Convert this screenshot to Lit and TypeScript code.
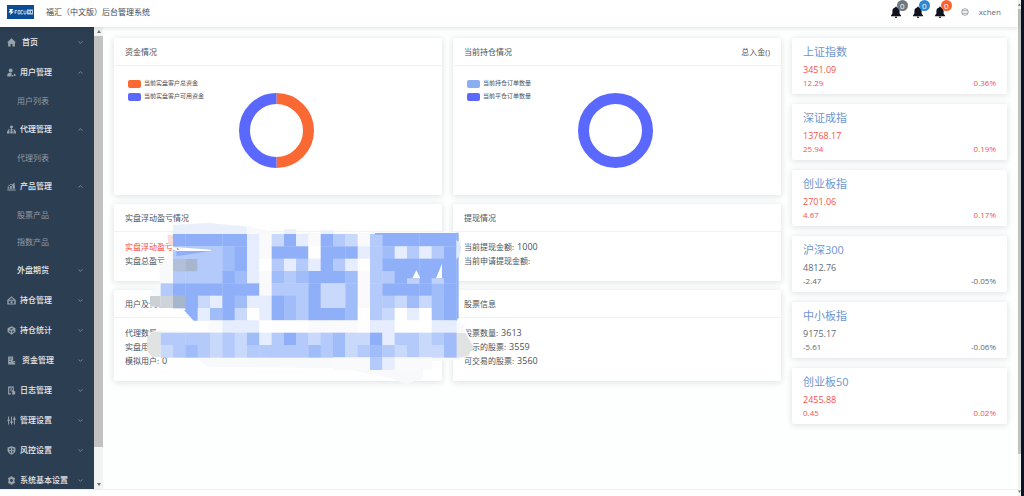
import { LitElement, html, css, svg, nothing } from "lit";
import { customElement } from "lit/decorators.js";
import { classMap } from "lit/directives/class-map.js";

interface MenuEntry {
  label: string;
  icon?: string;
  open?: boolean;
  wide?: boolean;
  children?: string[];
}

const icons: Record<string, unknown> = {
  home: svg`<path d="M8 .5 0 8h2v7h4.300v-4.500h3.400V15H14V8h2z" />`,
  user: svg`<circle cx="6.500" cy="4.500" r="3.500" /><path d="M.5 15v-3q0-3.500 4.500-3.500h3V15zM9 12.500h2V15H9z" /><circle cx="13.500" cy="12.500" r="2" />`,
  tree: svg`<path d="M5.500 1.500h5v4H8.900V8h5.600v3H16v4h-4.500v-4h1V9.500H8.900V11h1.300v4H5.800v-4h1.300V9.500H3.500V11h1v4H0v-4h1.500V8h5.600V5.500H5.500z" />`,
  chart: svg`<path d="M.5 15h15v-1.800H.5zM1 9.500h3.500V12H1zM5.500 7h3.200v5H5.500zM10 4.500h4V12h-4zM1 7.500l5.500-4 3 1 3.500-3 1 1-4.500 3.500-3-1L2 8.500z" />`,
  bag: svg`<path fill-rule="evenodd" d="M8 .5.5 7V15h15V7zM8 3l4 3.700H4zM3 8.500h10v4.800H3z" /><circle cx="8" cy="10.900" r="1.900" />`,
  cube: svg`<path fill-rule="evenodd" d="M8 .5 15 4v6.500L12 12.500 8 15.500l-4-3L1 10.500V4zM8 3.500 5 5l3 1.500L11 5zM4 7.500V10l3 1.800V9zm8 0L9 9v2.800l3-1.800z" />`,
  doc: svg`<path fill-rule="evenodd" d="M2 1h9v7H9v1.500h2V15H2zM4 3v1.200h5V3zm0 3v1.200h3.500V6zm0 3.500v1.200h3V9.500z" /><path d="M10 9h4.500v2H10zM10 12h4.500v3H10z" />`,
  log: svg`<path fill-rule="evenodd" d="M2 1h10v7h-1.700V3H4v10h3v2H2z" /><path d="M5.300 4.500H9V6H5.300zM5.300 7.500H8V9H5.300zM14.500 15H9v-3l5.500-3z" /><circle cx="10.500" cy="9.500" r="2.200" />`,
  sliders: svg`<path d="M2 1h1.800v5h1.200v3H3.800v6H2V9H.8V6H2zM7.100 1h1.800v8.500h1.200v3H8.900V15H7.100v-2.500H5.900v-3h1.200zM12.200 1H14v3h1.200v3H14v8h-1.800V7H11V4h1.200z" />`,
  shield: svg`<path fill-rule="evenodd" d="M8 .5l7 2V9q-1 4.500-7 6.700Q2 13.500 1 9V2.500zM4 4.500V7h3V4zm5-.5v3h3V4.500zM4 9q.8 2.500 3 3.700V9zM9 9v3.700Q11.200 11.500 12 9z" />`,
  gear: svg`<path fill-rule="evenodd" d="M6.500.5h3l.7 2.200 2.300-.6 2 2.600-1.300 1.900v2.800l1.300 1.900-2 2.600-2.300-.6-.7 2.200h-3l-.7-2.200-2.300.6-2-2.600 1.300-1.900V6.600L1.500 4.700l2-2.600 2.300.6zM8 5.500a2.500 2.500 0 1 0 0 5 2.500 2.500 0 1 0 0-5z" />`,
};

const menu: MenuEntry[] = [
  { label: "首页", icon: "home", wide: true },
  { label: "用户管理", icon: "user", open: true, children: ["用户列表"] },
  { label: "代理管理", icon: "tree", open: true, children: ["代理列表"] },
  { label: "产品管理", icon: "chart", open: true, children: ["股票产品", "指数产品"] },
  { label: "外盘期货" },
  { label: "持仓管理", icon: "bag" },
  { label: "持仓统计", icon: "cube" },
  { label: "资金管理", icon: "doc", wide: true },
  { label: "日志管理", icon: "log" },
  { label: "管理设置", icon: "sliders" },
  { label: "风控设置", icon: "shield" },
  { label: "系统基本设置", icon: "gear" },
];

const indices = [
  { name: "上证指数", value: "3451.09", change: "12.29", rate: "0.36%", up: true },
  { name: "深证成指", value: "13768.17", change: "25.94", rate: "0.19%", up: true },
  { name: "创业板指", value: "2701.06", change: "4.67", rate: "0.17%", up: true },
  { name: "沪深300", value: "4812.76", change: "-2.47", rate: "-0.05%", up: false },
  { name: "中小板指", value: "9175.17", change: "-5.61", rate: "-0.06%", up: false },
  { name: "创业板50", value: "2455.88", change: "0.45", rate: "0.02%", up: true },
];

// One character per mosaic tile: 0 is the palest tint, 5 the deepest, "w" is white.
const tiles: string[] = [
  ".55555510251053203555555",
  ".33334510555w55513413135",
  ".3333451w3131531w3555555",
  ".33335410434555403355555",
  "355555550333522403555545",
  ".45215411543522403324245",
  "...1452w15435554w32w1w45",
  "....0111wwww0000w11www11",
  "333323241353234225133234",
  "234323233333434234323224",
  "..............00031000..",
];

const tints: Record<string, string> = {
  w: "#ffffff",
  "0": "#fafafc",
  "1": "#e5edfe",
  "2": "#c9d9fc",
  "3": "#b4cafb",
  "4": "#a1bdf9",
  "5": "#8fb0f8",
};

const fontStack = css`"Open Sans", "Noto Sans CJK SC", sans-serif`;

@customElement("side-menu")
class SideMenu extends LitElement {
  static styles = css`
    :host { display: block; background: #2c3e52; overflow: hidden; font-family: ${fontStack}; }
    ul { list-style: none; margin: 0; padding: 0; }
    .item {
      display: flex; align-items: center; gap: 4px; box-sizing: border-box;
      width: 100%; height: 30px; padding: 0 11px 0 7px; border: 0;
      background: none; color: #e6eaee; font: 500 8px/12px ${fontStack}; text-align: left; white-space: nowrap;
    }
    .item.plain { padding-left: 17px; }
    .item.wide { gap: 6px; }
    .icon { width: 9px; height: 9px; flex: none; fill: #98a2ab; }
    .label { flex: 1; }
    .arrow { width: 5px; height: 3px; flex: none; fill: none; stroke: #76858f; }
    .sub {
      display: flex; align-items: center; height: 27px; padding-left: 17px;
      color: #929ca7; font-size: 8px; line-height: 12px; text-decoration: none;
    }
  `;

  render() {
    return html`<nav aria-label="主菜单"><ul>
      ${menu.map((m) => html`<li>
        <button type="button" class=${classMap({ item: true, plain: !m.icon, wide: !!m.wide })} aria-expanded=${m.open ? "true" : "false"}>
          ${m.icon ? html`<svg class="icon" viewBox="0 0 16 16" aria-hidden="true">${icons[m.icon]}</svg>` : nothing}
          <span class="label">${m.label}</span>
          <svg class="arrow" viewBox="0 0 5 3" aria-hidden="true"><path d=${m.open ? "M.5 2.500 2.500.7 4.500 2.500" : "M.5.5 2.500 2.300 4.500.5"} /></svg>
        </button>
        ${m.children
          ? html`<ul>${m.children.map((c) => html`<li><a class="sub" href="#">${c}</a></li>`)}</ul>`
          : nothing}
      </li>`)}
    </ul></nav>`;
  }
}

@customElement("scroll-rail")
class ScrollRail extends LitElement {
  static styles = css`
    :host { display: flex; flex-direction: column; background: #f2f3f3; }
    .thumb { flex: 1; background: #c2c2c2; }
    .cap { display: flex; align-items: center; justify-content: center; height: 9px; }
    .end { align-items: flex-end; height: 42px; padding-bottom: 3px; box-sizing: border-box; }
    svg { width: 4px; height: 3px; fill: #687078; }
  `;

  render() {
    return html`
      <div class="cap"><svg viewBox="0 0 4 3"><path d="M0 3 2 0l2 3z" /></svg></div>
      <div class="thumb"></div>
      <div class="cap end"><svg viewBox="0 0 4 3"><path d="M0 0h4L2 3z" /></svg></div>
    `;
  }
}

@customElement("app-root")
class AppRoot extends LitElement {
  static styles = css`
    :host {
      display: flex; height: 100vh; overflow: hidden; background: #fdfefe;
      color: #48525c; font-family: ${fontStack}; font-size: 8px; line-height: 14px;
    }
    .window { flex: 1; min-width: 0; display: flex; flex-direction: column; }
    .topbar {
      display: flex; align-items: center; flex: none; box-sizing: border-box; height: 27px;
      padding: 0 17px 4px 7px; background: #fff; box-shadow: 0 1px 5px #0000001f; z-index: 1;
    }
    .logo { width: 27px; height: 14px; margin-right: 12px; }
    .title { margin: 0; font-size: 8px; line-height: 12px; font-weight: 400; color: #3f4850; flex: 1; }
    .tools { display: flex; align-items: center; }
    .bell {
      position: relative; width: 10px; height: 12px; margin-right: 12px; padding: 0;
      border: 0; background: none;
    }
    .bell svg { display: block; width: 10px; height: 12px; fill: #10131f; }
    .badge {
      position: absolute; left: 6px; top: -6px; width: 11px; height: 11px; border-radius: 50%;
      color: #fff; font: 8px/11px ${fontStack}; text-align: center;
    }
    .grey { background: #6f777c; }
    .blue { background: #2f87d0; }
    .orange { background: #fb6430; }
    .globe { width: 8px; height: 8px; margin: 0 10px 0 4px; fill: none; stroke: #8c949b; stroke-width: .8px; }
    .account { color: #626c76; text-decoration: none; }
    .workspace { flex: 1; min-height: 0; display: flex; }
    side-menu { width: 94px; flex: none; }
    .menu-rail { width: 9px; flex: none; }
    .board {
      position: relative; flex: 1; min-width: 0; display: grid; align-items: start;
      grid-template-columns: 667fr 215fr; gap: 11px; padding: 11px; overflow: hidden;
    }
    .panels { display: grid; grid-template-columns: 1fr 1fr; gap: 9px 11px; }
    .card { background: #fff; border-radius: 2px; box-shadow: 0 1px 6px #1c2c3c26; }
    .head {
      display: flex; justify-content: space-between; align-items: center; height: 27px;
      padding: 0 11px; border-bottom: 1px solid #f0f2f3;
    }
    h2 { margin: 0; font-size: 8px; line-height: 12px; font-weight: 400; }
    .lines { padding: 8px 11px 13px; margin: 0; }
    .line { display: flex; gap: 3px; height: 14px; }
    .line dd { margin: 0; font-size: 9px; }
    .loss { color: #fb4a36; }
    .chart { display: grid; padding: 11px 17px 27px 14px; }
    .legend, .donut { grid-area: 1 / 1; }
    .legend { list-style: none; margin: 0; padding: 0; font-size: 6px; line-height: 13px; }
    .legend li { display: flex; align-items: center; gap: 3px; }
    .swatch { width: 13px; height: 8px; border-radius: 2px; }
    .donut { width: 75px; height: 75px; margin-top: 16px; justify-self: center; fill: none; stroke-width: 11px; }
    .c-orange { background: #fa6834; stroke: #fa6834; }
    .c-indigo { background: #5b68fd; stroke: #5b68fd; }
    .c-sky { background: #8dadf3; stroke: #8dadf3; }
    .quotes { display: grid; gap: 10px; }
    .quote { padding: 6px 11px 5px; color: #626970; }
    .quote h2 { margin-bottom: 3px; font-size: 11px; line-height: 16px; color: #6f95cf; }
    .quote.up { color: #fb5149; }
    .value { font-size: 9px; line-height: 14px; }
    .move { display: flex; justify-content: space-between; line-height: 12px; }
    .mosaic { position: absolute; left: 37px; top: 188px; width: 340px; height: 175px; }
    .foot { flex: none; height: 6px; background: #fff; border-top: 1px solid #eceeef; }
    .page-rail { width: 3px; flex: none; }
    .edge { width: 3px; flex: none; background: #0b1226; }
  `;

  private bell(tone: string) {
    return html`<button type="button" class="bell" aria-label="通知">
      <svg viewBox="0 0 10 12" aria-hidden="true"><path d="M4.200.8h1.600v.8Q8.600 2.300 8.600 5v2.500L10 9.500v.8H0v-.8l1.400-2V5q0-2.700 2.800-3.400zM3.700 10.800h2.600q-.2 1.200-1.300 1.200t-1.300-1.200z" /></svg>
      <span class="badge ${tone}">0</span>
    </button>`;
  }

  private lines(rows: { label: string; value?: string; loss?: boolean }[]) {
    return html`<dl class="lines">
      ${rows.map((r) => html`<div class=${classMap({ line: true, loss: !!r.loss })}><dt>${r.label}:</dt><dd>${r.value ?? ""}</dd></div>`)}
    </dl>`;
  }

  private legend(rows: [string, string][]) {
    return html`<ul class="legend">
      ${rows.map(([tone, label]) => html`<li><span class="swatch ${tone}"></span>${label}</li>`)}
    </ul>`;
  }

  private renderMosaic() {
    const size = 36.95;
    return html`<svg class="mosaic" viewBox="0 0 1020 525" aria-hidden="true">
      <path fill="#f8f9fa" d="M100 30 205 24 320 32 400 52 640 55 705 52H955L963 80 955 130V317L975 335 1000 395 985 425 950 435 848 440 850 490 800 508 750 490 610 460 200 455 170 430 95 428 22 408 25 355 50 345 205 352 205 318 160 318 132 286 100 280 30 275 28 235 60 205 58 155 85 120 100 108z" />
      <path fill="#e9effb" d="M100 30 205 24 320 35V57H99zM431 42h37v16h-37zM543 46h38v12h-38z" />
      <path fill="#f9dcd9" d="M82 60h17v34l-14-8z" />
      <path fill="#e1e3e3" d="M22 365 35 352 62 350v76H35L22 408zM949 354h27l24 41-16 28-35 6z" />
      <path fill="#cbd0d4" d="M30 243h32v34l-32-3z" />
      ${tiles.map((row, y) =>
        [...row].map((t, x) =>
          tints[t]
            ? svg`<rect x=${Math.round(62 + x * size)} y=${57 + y * 37} width="38" height="38" fill=${tints[t]} />`
            : nothing
        )
      )}
      <path fill="#cfd4da" d="M62 243h37v36H62z" />
      <path fill="#a6b6cd" d="M99 243h37v36H99zM136 132h36v37h-36z" />
      <path fill="#b1c0d8" d="M99 132h37v37H99z" />
      <path fill="#8fb0f8" d="M136 243h37v74h-12l-29-31h4zM949 53h7v255l-7 9zM705 54h244v5H705zM109 108h105l-105 16z" />
      <path fill="#fff" d="M99 97h15l98 7v4H110L99 103zM801 190h16l12-24 12 24zM888 190h18v-44z" />
      <path fill="#c0d2fb" d="M801 190h37v16h-37zM875 190h37v16h-37z" />
      <path fill="#dfe9fd" d="M949 76q14 5 14 25t-14 32z" />
      <path fill="#fb4a36" d="M110 98l8 5-5 2z" />
    </svg>`;
  }

  render() {
    return html`
      <div class="window">
        <header class="topbar">
          <svg class="logo" viewBox="0 0 27 14" aria-hidden="true">
            <rect width="27" height="14" fill="#0a4d97" />
            <path d="M2 4h4.500L4.500 6.500H7L3 10l.8-2.500H1.500L3 5.300z" fill="#fff" />
            <path d="M8 9V5.500h2M8 7h1.500M11 5.500h2V9h-2zM16 5.500h-2V9h2M17 5.500V9h2V5.500" fill="none" stroke="#dce8f5" stroke-width=".8" />
            <path d="M20 4.500h6v5h-6z" fill="#b5cbe4" /><path d="M21.500 6h1v2h-1zM24 6h1v2h-1z" fill="#0a4d97" />
          </svg>
          <h1 class="title">福汇（中文版）后台管理系统</h1>
          <div class="tools">
            ${this.bell("grey")}${this.bell("blue")}${this.bell("orange")}
            <svg class="globe" viewBox="0 0 8 8" aria-hidden="true"><circle cx="4" cy="4" r="3.300" /><path d="M1 2.700h6M1 5.300h6" /></svg>
            <a class="account" href="#">xchen</a>
          </div>
        </header>
        <div class="workspace">
          <side-menu></side-menu>
          <scroll-rail class="menu-rail" aria-hidden="true"></scroll-rail>
          <main class="board">
            <div class="panels">
              <section class="card">
                <div class="head"><h2>资金情况</h2></div>
                <div class="chart">
                  ${this.legend([["c-orange", "当前实盘客户总资金"], ["c-indigo", "当前实盘客户可用资金"]])}
                  <svg class="donut" viewBox="0 0 75 75" role="img" aria-label="资金情况">
                    <path class="c-orange" d="M37.500 5.500a32 32 0 0 1 0 64" />
                    <path class="c-indigo" d="M37.500 69.500a32 32 0 0 1 0-64" />
                  </svg>
                </div>
              </section>
              <section class="card">
                <div class="head"><h2>当前持仓情况</h2><span>总入金()</span></div>
                <div class="chart">
                  ${this.legend([["c-sky", "当前持仓订单数量"], ["c-indigo", "当前平仓订单数量"]])}
                  <svg class="donut" viewBox="0 0 75 75" role="img" aria-label="当前持仓情况">
                    <circle class="c-indigo" cx="37.500" cy="37.500" r="32" />
                  </svg>
                </div>
              </section>
              <section class="card">
                <div class="head"><h2>实盘浮动盈亏情况</h2></div>
                ${this.lines([{ label: "实盘浮动盈亏", loss: true }, { label: "实盘总盈亏" }])}
              </section>
              <section class="card">
                <div class="head"><h2>提现情况</h2></div>
                ${this.lines([{ label: "当前提现金额", value: "1000" }, { label: "当前申请提现金额" }])}
              </section>
              <section class="card">
                <div class="head"><h2>用户及代理</h2></div>
                ${this.lines([{ label: "代理数量" }, { label: "实盘用户" }, { label: "模拟用户", value: "0" }])}
              </section>
              <section class="card">
                <div class="head"><h2>股票信息</h2></div>
                ${this.lines([
                  { label: "股票数量", value: "3613" },
                  { label: "显示的股票", value: "3559" },
                  { label: "可交易的股票", value: "3560" },
                ])}
              </section>
            </div>
            <aside class="quotes">
              ${indices.map((q) => html`<section class=${classMap({ card: true, quote: true, up: q.up })}>
                <h2>${q.name}</h2>
                <div class="value">${q.value}</div>
                <div class="move"><span>${q.change}</span><span>${q.rate}</span></div>
              </section>`)}
            </aside>
            ${this.renderMosaic()}
          </main>
        </div>
        <div class="foot"></div>
      </div>
      <scroll-rail class="page-rail" aria-hidden="true"></scroll-rail>
      <div class="edge"></div>
    `;
  }
}
